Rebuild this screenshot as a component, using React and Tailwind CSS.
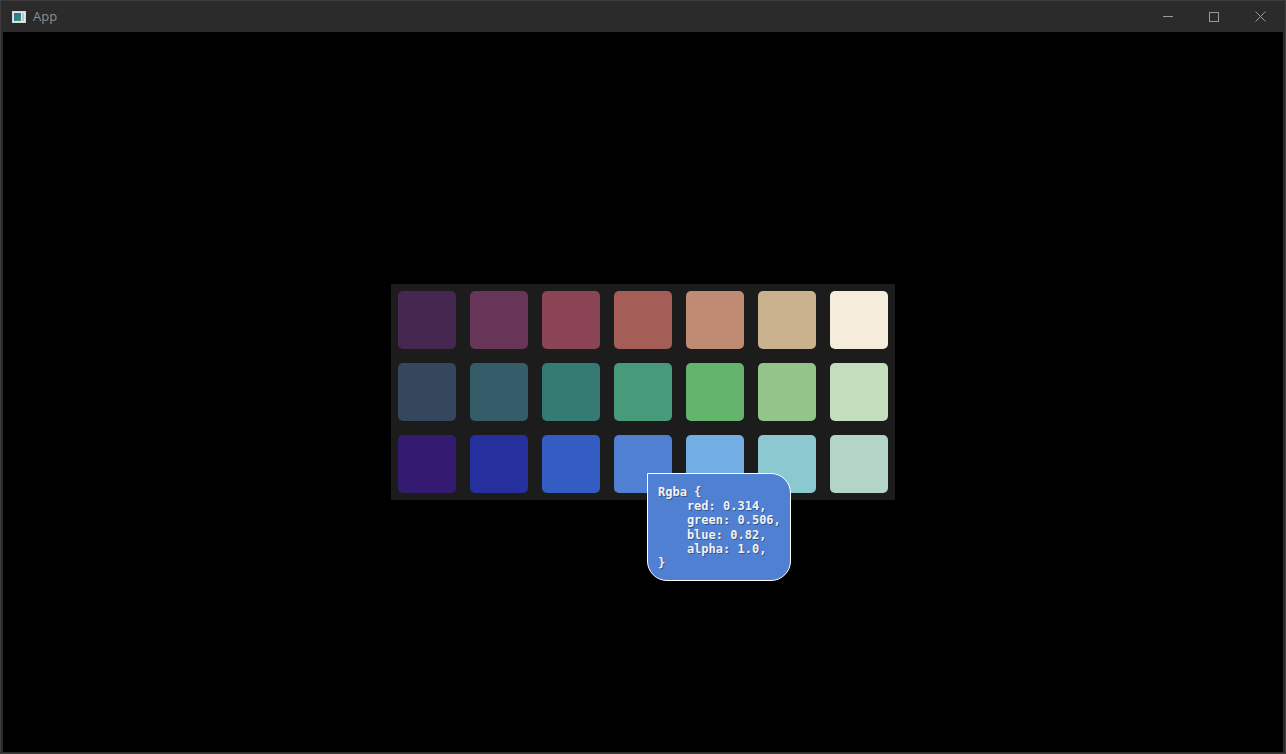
import React from "react";

const rows = [
  ["#46274f", "#663558", "#8a4455", "#a55d58", "#bf8c73", "#c9b28d", "#f5ecdc"],
  ["#35475c", "#355d69", "#357b73", "#479b7a", "#64b46d", "#93c58a", "#c4ddbc"],
  ["#341a70", "#252f9e", "#335dc2", "#5080d1", "#72ade3", "#8cc8d0", "#b5d4c8"],
];

export default function App() {
  const text = `Rgba {
    red: 0.314,
    green: 0.506,
    blue: 0.82,
    alpha: 1.0,
}`;
  return (
    <div className="w-[1286px] h-[754px] bg-[#2b2b2b] border border-[#3d3d3d] flex flex-col overflow-hidden">
      <div className="h-[31px] flex items-center shrink-0">
        <div className="ml-[11px] w-[14px] h-[12px] border border-[#d8d8d8] bg-[#e6e6e6] flex p-[1px] gap-[1px]">
          <div className="w-[7px] h-full bg-gradient-to-br from-[#2d6aa0] to-[#3a9a6a]"></div>
          <div className="flex-1 h-full bg-[#b0c8d8]"></div>
        </div>
        <span className="ml-[7px] text-[13px] text-[#8e8e8e] font-['Open_Sans',sans-serif]">App</span>
        <div className="flex-1"></div>
        <div className="w-[46px] h-[31px] flex items-center justify-center">
          <div className="w-[10px] h-[1px] bg-[#9a9a9a]"></div>
        </div>
        <div className="w-[46px] h-[31px] flex items-center justify-center">
          <div className="w-[10px] h-[10px] border border-[#9a9a9a]"></div>
        </div>
        <div className="w-[46px] h-[31px] flex items-center justify-center mr-[2px]">
          <svg width="11" height="11" viewBox="0 0 11 11">
            <path d="M0.5 0.5 L10.5 10.5 M10.5 0.5 L0.5 10.5" stroke="#9a9a9a" strokeWidth="1" />
          </svg>
        </div>
      </div>
      <div className="flex-1 bg-black mx-[2px] mb-[1px] flex items-center justify-center">
        <div className="relative bg-[#1c1c1c] p-[7px] flex flex-col gap-[14px]">
          {rows.map((r, i) => (
            <div key={i} className="flex gap-[14px]">
              {r.map((c) => (
                <div key={c} className="w-[58px] h-[58px] rounded-[5px]" style={{ backgroundColor: c }}></div>
              ))}
            </div>
          ))}
          <div className="absolute left-[256px] top-[189px] w-[144px] h-[108px] bg-[#5080d1] border border-white rounded-[20px] rounded-tl-none pl-[10px] pt-[11px]">
            <pre className="m-0 font-['DejaVu_Sans_Mono',monospace] font-bold text-[12px] leading-[14.2px] text-[#f2f2f2] [text-shadow:1px_1px_0_rgba(0,0,0,0.35)]">{text}</pre>
          </div>
        </div>
      </div>
    </div>
  );
}
